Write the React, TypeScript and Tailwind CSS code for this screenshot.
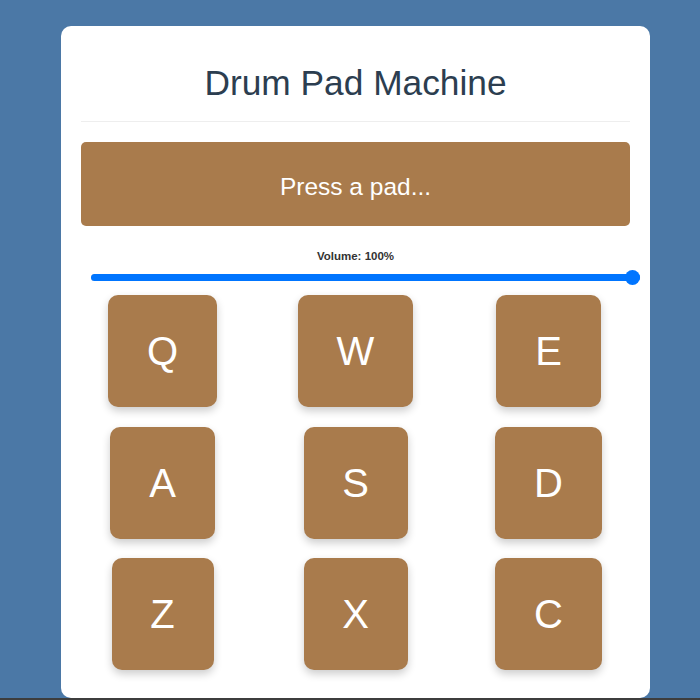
import { useState } from "react";

type Pad = {
  key: string;
  name: string;
  width: string;
};

const pads: Pad[] = [
  { key: "Q", name: "Heater 1", width: "w-[109px]" },
  { key: "W", name: "Heater 2", width: "w-[115px]" },
  { key: "E", name: "Heater 3", width: "w-[105px]" },
  { key: "A", name: "Heater 4", width: "w-[105px]" },
  { key: "S", name: "Clap", width: "w-[104px]" },
  { key: "D", name: "Open HH", width: "w-[107px]" },
  { key: "Z", name: "Kick n' Hat", width: "w-[102px]" },
  { key: "X", name: "Kick", width: "w-[104px]" },
  { key: "C", name: "Closed HH", width: "w-[107px]" },
];

export default function App() {
  const [display, setDisplay] = useState("Press a pad...");
  const [volume, setVolume] = useState(100);

  return (
    <div className="min-h-[700px] bg-[#4b78a6] font-['Liberation_Sans',Arial,sans-serif]">
      <div className="h-[698px] pt-[26px]">
        <div className="ml-[61px] w-[589px] rounded-[10px] bg-white px-5 pb-[28px] pt-[37px]">
          <div className="border-b border-[#eeeeee] pb-[18px]">
            <h1 className="text-center text-[35.3px] leading-[40px] text-[#2c3e50]">
              Drum Pad Machine
            </h1>
          </div>

          <div className="mt-5 flex h-[84px] items-center justify-center rounded-[5px] bg-[#a97b4c] pt-[7px] text-[24.5px] text-white">
            {display}
          </div>

          <p className="mt-[24px] text-center text-[11.5px] font-bold leading-[13px] text-[#333333]">
            Volume: {volume}%
          </p>

          <div className="relative ml-[10px] mt-[7px] flex h-[15px] w-full items-center">
            <div className="h-[7px] w-full rounded-full bg-[#d0d0d0]">
              <div
                className="h-full rounded-full bg-[#0075ff]"
                style={{ width: `${volume}%` }}
              />
            </div>
            <div
              className="absolute top-0 h-[15px] w-[15px] -translate-x-full rounded-full bg-[#0075ff]"
              style={{ left: `${volume}%` }}
            />
            <input
              type="range"
              min={0}
              max={100}
              value={volume}
              onChange={(e) => setVolume(Number(e.target.value))}
              className="absolute inset-0 h-full w-full cursor-pointer opacity-0"
            />
          </div>

          <div className="mt-[10px] grid grid-cols-3 justify-items-center gap-x-[30px] gap-y-[19.5px]">
            {pads.map((pad) => (
              <button
                key={pad.key}
                onClick={() => setDisplay(pad.name)}
                className={`${pad.width} flex h-[112px] items-center justify-center rounded-[10px] bg-[#a97b4c] text-[40px] text-white shadow-[0_4px_8px_rgba(0,0,0,0.2)]`}
              >
                {pad.key}
              </button>
            ))}
          </div>
        </div>
      </div>
      <div className="h-[2px] bg-[#3d3d3d]" />
    </div>
  );
}
